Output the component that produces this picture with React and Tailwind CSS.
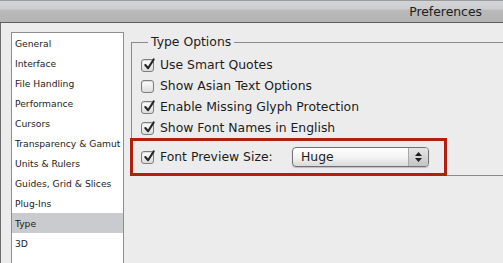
import React from 'react';

const sections = [
  'General',
  'Interface',
  'File Handling',
  'Performance',
  'Cursors',
  'Transparency & Gamut',
  'Units & Rulers',
  'Guides, Grid & Slices',
  'Plug-Ins',
  'Type',
  '3D',
];

const options = [
  { label: 'Use Smart Quotes', checked: true },
  { label: 'Show Asian Text Options', checked: false },
  { label: 'Enable Missing Glyph Protection', checked: true },
  { label: 'Show Font Names in English', checked: true },
];

const Checkbox = ({ checked }) => (
  <span className="relative w-[13px] h-[13px] shrink-0 rounded-[3px] border border-[#7d7d7d] bg-gradient-to-b from-white to-[#dcdcdc] shadow-[inset_0_1px_1px_rgba(0,0,0,0.15)]">
    {checked && (
      <svg viewBox="0 0 14 14" className="absolute left-[1px] -top-[2px] w-[13px] h-[13px]">
        <path d="M2.5 7.5 L5.5 11 L11.5 1.5" fill="none" stroke="#262626" strokeWidth="2.2" strokeLinecap="round" strokeLinejoin="round" />
      </svg>
    )}
  </span>
);

const App = () => {
  return (
    <div
      className="w-[503px] h-[263px] overflow-hidden flex flex-col bg-[#ececec] text-[#1c1c1c]"
      style={{ fontFamily: '"DejaVu Sans", Verdana, sans-serif' }}
    >
      <div className="h-[23px] shrink-0 flex items-center justify-end pr-[21px] border-t border-[#9c9c9c] border-b border-b-[#5c5c5c] bg-[linear-gradient(to_bottom,#d2d4d8_0px,#ccced1_8px,#b9bab9_9px,#b3b4b3_21px)]">
        <span className="text-[12.4px] text-[#1e1e1e] pt-[2px]">Preferences</span>
      </div>

      <div className="flex-1 flex border-l border-[#6e6e6e] pl-[10px] pt-[9px]">
        <div className="w-[113px] h-[260px] shrink-0 bg-white border border-[#8e8e8e]">
          {sections.map((s) => (
            <div
              key={s}
              className={`h-[20px] flex items-center pl-[3px] pt-[1px] text-[9.2px] whitespace-nowrap ${s === 'Type' ? 'bg-[#c9cbce]' : ''}`}
            >
              {s}
            </div>
          ))}
        </div>

        <fieldset className="ml-[7px] mt-[2px] w-[400px] h-[142px] shrink-0 border-l border-t border-b border-[#8a8a8a]">
          <legend className="ml-[16px] px-[3px] text-[12.4px] leading-[16px]">Type Options</legend>
          <div className="flex flex-col pt-[5px]">
            {options.map((o) => (
              <div key={o.label} className="h-[21px] flex items-center pl-[9px] gap-[6px] text-[12.4px]">
                <Checkbox checked={o.checked} />
                <span>{o.label}</span>
              </div>
            ))}
            <div className="-ml-[2px] -mt-[1px] w-[317px] h-[38px] border-[3px] border-[#b21f0e] flex items-center pl-[8px] text-[12.4px]">
              <Checkbox checked />
              <span className="ml-[6px] w-[132px] whitespace-nowrap">Font Preview Size:</span>
              <div className="w-[137px] h-[20px] flex rounded-[4px] border border-[#727272] bg-gradient-to-b from-white via-[#f4f4f4] to-[#dadada] shadow-[0_1px_1px_rgba(0,0,0,0.2)] overflow-hidden">
                <span className="flex-1 pl-[8px] flex items-center">Huge</span>
                <span className="w-[20px] flex flex-col items-center justify-center gap-[2px] border-l border-[#a8a8a8] bg-gradient-to-b from-[#e6e6e6] to-[#c4c4c4]">
                  <svg width="7" height="4" viewBox="0 0 7 4"><path d="M3.5 0 L7 4 L0 4 Z" fill="#1e1e1e" /></svg>
                  <svg width="7" height="4" viewBox="0 0 7 4"><path d="M0 0 L7 0 L3.5 4 Z" fill="#1e1e1e" /></svg>
                </span>
              </div>
            </div>
          </div>
        </fieldset>
      </div>
    </div>
  );
};

export default App;
